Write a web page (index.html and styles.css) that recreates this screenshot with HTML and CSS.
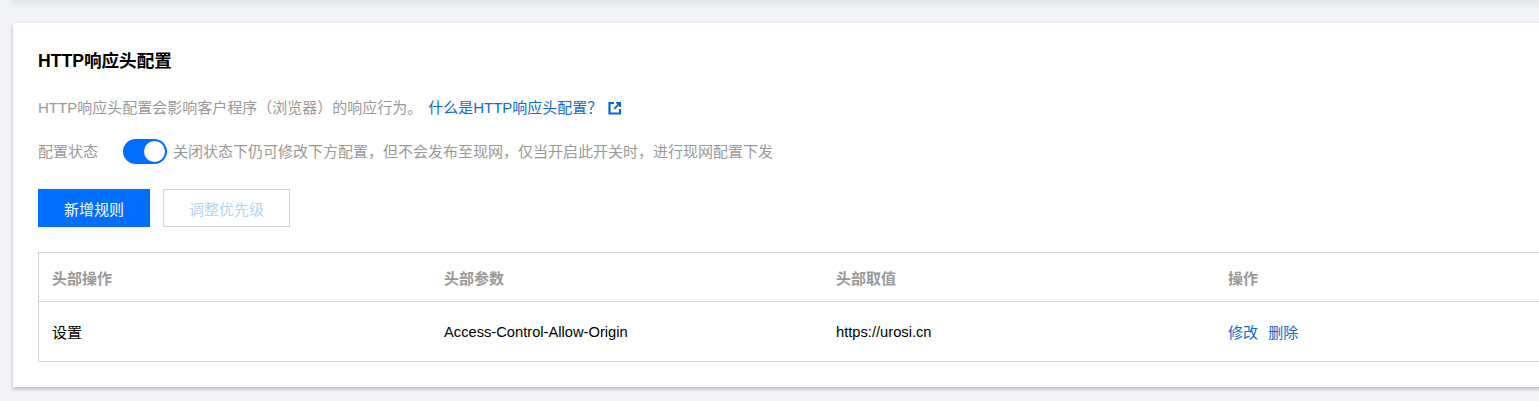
FILE: index.html
```html
<!DOCTYPE html>
<html lang="zh-CN">
<head>
    <meta charset="UTF-8">
    <meta name="viewport" content="width=device-width, initial-scale=1.0">
    <title>HTTP响应头配置</title>
    <link rel="stylesheet" href="styles.css">
</head>
<body>
    <div class="prev-card"></div>

    <div class="card">
        <h2 class="card-title">HTTP响应头配置</h2>

        <p class="desc">
            <span>HTTP响应头配置会影响客户程序（浏览器）的响应行为。</span>
            <a class="link" href="#">什么是HTTP响应头配置？</a>
            <svg class="ext-icon" viewBox="0 0 14 14" width="14" height="14">
                <path d="M6 2H1.500v10.500H12V8" fill="none" stroke="#0067db" stroke-width="2.200"/>
                <path d="M8 1h5v5h-1.800L10.700 4.600 6.800 8.500 5.500 7.200 9.400 3.300 8 2z" fill="#0067db"/>
            </svg>
        </p>

        <div class="status-row">
            <span class="status-label">配置状态</span>
            <span class="switch"><span class="switch-knob"></span></span>
            <span class="status-tip">关闭状态下仍可修改下方配置，但不会发布至现网，仅当开启此开关时，进行现网配置下发</span>
        </div>

        <div class="actions">
            <button class="btn btn-primary">新增规则</button>
            <button class="btn btn-disabled">调整优先级</button>
        </div>

        <div class="table">
            <div class="table-row table-head">
                <div class="cell">头部操作</div>
                <div class="cell">头部参数</div>
                <div class="cell">头部取值</div>
                <div class="cell">操作</div>
            </div>
            <div class="table-row table-body">
                <div class="cell">设置</div>
                <div class="cell cell-latin">Access-Control-Allow-Origin</div>
                <div class="cell cell-latin">https://urosi.cn</div>
                <div class="cell">
                    <a class="link op-link" href="#">修改</a>
                    <a class="link op-link" href="#">删除</a>
                </div>
            </div>
        </div>
    </div>
</body>
</html>
```

FILE: styles.css
```css
html, body {
    height: 401px;
    overflow: hidden;
}
body {
    margin: 0;
    width: 1539px;
    background-color: #f3f4f7;
    font-family: "Liberation Sans", "Noto Sans CJK SC", sans-serif;
    font-size: 15px;
    color: #000;
}
.prev-card {
    height: 0;
    box-shadow: 0 1px 6px 1px rgba(54, 58, 80, 0.32);
    margin-left: 13px;
}
.card {
    margin: 23px 0 0 13px;
    width: 1640px;
    height: 364px;
    box-sizing: border-box;
    padding: 26px 25px 0;
    background-color: #fff;
    box-shadow: 0 2px 4px rgba(54, 58, 80, 0.32);
}
.card-title {
    margin: 0;
    font-size: 17.6px;
    line-height: 24px;
    font-weight: bold;
}
.desc {
    margin: 23px 0 0;
    height: 24px;
    line-height: 24px;
    color: #999;
    display: flex;
    align-items: center;
}
a.link {
    color: #0a6ccf;
    text-decoration: none;
}
.desc .link {
    margin-left: 6px;
}
.ext-icon {
    margin-left: 6px;
}
.status-row {
    margin-top: 19px;
    height: 25px;
    line-height: 25px;
    color: #999;
    display: flex;
    align-items: center;
}
.status-label {
    width: 85px;
}
.switch {
    width: 44px;
    height: 25px;
    border-radius: 13px;
    background-color: #006eff;
    position: relative;
    margin-right: 6px;
    flex-shrink: 0;
}
.switch-knob {
    position: absolute;
    top: 2px;
    right: 2px;
    width: 21px;
    height: 21px;
    border-radius: 50%;
    background-color: #fff;
}
.actions {
    margin-top: 25px;
    display: flex;
    gap: 13px;
}
.btn {
    height: 38px;
    font-family: inherit;
    font-size: 15px;
    box-sizing: border-box;
    padding: 0;
}
.btn-primary {
    width: 112px;
    background-color: #006eff;
    color: #fff;
    border: none;
}
.btn-disabled {
    width: 127px;
    background-color: #fff;
    color: #b5d3f3;
    border: 1px solid #d1d2d6;
}
.table {
    margin-top: 25px;
    border: 1px solid #d0d1d4;
    border-right: none;
}
.table-row {
    display: grid;
    grid-template-columns: repeat(4, 392px);
    align-items: center;
}
.table-head {
    height: 48px;
    border-bottom: 1px solid #d8d9dc;
    color: #999;
    font-weight: bold;
}
.table-body {
    height: 59px;
}
.cell {
    padding-left: 13px;
}
.cell-latin {
    font-size: 14.7px;
}
.op-link {
    margin-right: 6px;
}
```
